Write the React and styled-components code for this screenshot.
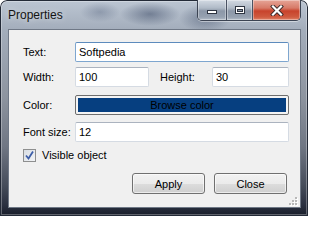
import React from 'react';
import styled, { createGlobalStyle } from 'styled-components';

const GlobalStyle = createGlobalStyle`
  html, body {
    margin: 0;
    padding: 0;
    background: #ffffff;
  }
  body {
    font-family: "Liberation Sans", Arial, sans-serif;
  }
`;

const Window = styled.div`
  width: 308px;
  height: 216px;
  box-sizing: border-box;
  display: flex;
  flex-direction: column;
  border-radius: 7px 7px 0 0;
  background:
    radial-gradient(ellipse 30px 12px at 150px 14px, rgba(40, 55, 85, 0.45), transparent),
    radial-gradient(ellipse 26px 14px at 205px 18px, rgba(40, 55, 85, 0.4), transparent),
    radial-gradient(ellipse 20px 10px at 100px 12px, rgba(60, 75, 105, 0.3), transparent),
    linear-gradient(to bottom, #bcc6d3 0%, #a3adbb 14%, #8d949f 45%, #6f7683 68%, #454c5a 86%, #2a3040 95%, #181d29 100%);
  box-shadow: inset 0 0 0 1px #232a37, inset 0 0 0 2px rgba(255, 255, 255, 0.3);
  overflow: hidden;
`;

const TitleBar = styled.div`
  height: 29px;
  display: flex;
  align-items: flex-start;
  padding-left: 8px;
`;

const Title = styled.div`
  margin-top: 8px;
  font-size: 12px;
  line-height: 14px;
  color: #141414;
  text-shadow: 0 0 6px rgba(255, 255, 255, 0.7);
`;

const CaptionGroup = styled.div`
  margin-left: auto;
  margin-right: 7px;
  display: flex;
  height: 20px;
  border: 1px solid #3b4352;
  border-top: none;
  border-radius: 0 0 5px 5px;
  overflow: hidden;
  box-shadow: 0 1px 0 rgba(255, 255, 255, 0.45);
`;

const CaptionButton = styled.div`
  width: ${p => p.$w}px;
  height: 100%;
  display: flex;
  align-items: center;
  justify-content: center;
  box-sizing: border-box;
  border-left: ${p => (p.$first ? 'none' : '1px solid #4a5263')};
  background: ${p =>
    p.$close
      ? 'linear-gradient(to bottom, #e6a597 0%, #d77a68 40%, #c8432c 55%, #cf5a3f 85%, #e0846a 100%)'
      : 'linear-gradient(to bottom, #d3dae3 0%, #b0bac7 40%, #8c97a7 55%, #96a1b0 85%, #b3bcc8 100%)'};
  box-shadow: inset 0 0 0 1px rgba(255, 255, 255, 0.35);
`;

const Client = styled.div`
  position: relative;
  flex: 1;
  margin: 0 7px 8px 8px;
  box-sizing: border-box;
  background: #f0f0f0;
  border: 1px solid #6f7886;
  padding: 12px 11px 0 14px;
  display: flex;
  flex-direction: column;
  font-size: 11px;
  color: #000;
`;

const Row = styled.div`
  display: flex;
  align-items: center;
  margin-top: ${p => p.$mt || 0}px;
`;

const Label = styled.label`
  width: ${p => p.$w || 52}px;
  flex-shrink: 0;
  margin-left: ${p => p.$ml || 0}px;
  font-size: 11px;
  line-height: 13px;
  color: #000;
`;

const Field = styled.div`
  box-sizing: border-box;
  height: 20px;
  ${p => (p.$w ? `width: ${p.$w}px;` : 'flex: 1;')}
  background: #fff;
  border: 1px solid ${p => (p.$focus ? '#7ea6cf' : '#d5dbe3')};
  border-top-color: ${p => (p.$focus ? '#5d8bbd' : '#abb3bf')};
  border-radius: 2px;
  padding-left: 3px;
  display: flex;
  align-items: center;
  font-size: 11px;
  color: #000;
`;

const BrowseButton = styled.div`
  flex: 1;
  height: 20px;
  box-sizing: border-box;
  border: 1px solid #6e6e6e;
  border-radius: 2px;
  padding: 2px;
  background: #f4f4f4;
  display: flex;
`;

const BrowseFill = styled.div`
  flex: 1;
  background: #063f80;
  display: flex;
  align-items: center;
  justify-content: center;
  font-size: 11px;
  color: #000;
`;

const CheckRow = styled.div`
  display: flex;
  align-items: center;
  gap: 6px;
  margin-top: ${p => p.$mt}px;
`;

const CheckBox = styled.div`
  width: 13px;
  height: 13px;
  box-sizing: border-box;
  border: 1px solid #8e8f8f;
  background: linear-gradient(135deg, #d8dde3 0%, #f2f4f6 100%);
  display: flex;
  align-items: center;
  justify-content: center;
`;

const ButtonRow = styled.div`
  display: flex;
  justify-content: flex-end;
  gap: 9px;
  margin-top: ${p => p.$mt}px;
  margin-right: 2px;
`;

const Button = styled.button`
  width: 73px;
  height: 21px;
  box-sizing: border-box;
  border: 1px solid #707070;
  border-radius: 3px;
  background: linear-gradient(to bottom, #f2f2f2 0%, #ebebeb 50%, #dddddd 50%, #cfcfcf 100%);
  box-shadow: inset 0 0 0 1px rgba(255, 255, 255, 0.6);
  font-family: "Liberation Sans", Arial, sans-serif;
  font-size: 11px;
  color: #000;
  padding: 0;
`;

const Grip = styled.svg`
  position: absolute;
  right: 2px;
  bottom: 1px;
`;

const MinIcon = () => (
  <svg width="12" height="10" viewBox="0 0 12 10">
    <rect x="1.5" y="5.5" width="9" height="3" fill="#fff" stroke="#2d3441" strokeWidth="1" />
  </svg>
);

const MaxIcon = () => (
  <svg width="12" height="10" viewBox="0 0 12 10">
    <rect x="1.5" y="1.5" width="9" height="7" fill="none" stroke="#2d3441" strokeWidth="1" />
    <rect x="2.5" y="2.5" width="7" height="5" fill="none" stroke="#fff" strokeWidth="1" />
    <rect x="3" y="3" width="6" height="1" fill="#fff" />
    <rect x="3.5" y="4.5" width="5" height="2" fill="none" stroke="#2d3441" strokeWidth="1" />
  </svg>
);

const CloseIcon = () => (
  <svg width="14" height="11" viewBox="0 0 14 11">
    <path d="M3 1.5 L11 9.5 M11 1.5 L3 9.5" stroke="#3a2a2a" strokeWidth="4" strokeLinecap="square" />
    <path d="M3 1.5 L11 9.5 M11 1.5 L3 9.5" stroke="#fff" strokeWidth="2.2" strokeLinecap="square" />
  </svg>
);

const GripDots = () => (
  <Grip width="10" height="10" viewBox="0 0 10 10">
    {[[7, 1], [4, 4], [7, 4], [1, 7], [4, 7], [7, 7]].map(([x, y]) => (
      <g key={`${x}-${y}`}>
        <rect x={x + 1} y={y + 1} width="2" height="2" fill="#ffffff" />
        <rect x={x} y={y} width="2" height="2" fill="#b8b8b8" />
      </g>
    ))}
  </Grip>
);

export default function App() {
  return (
    <>
      <GlobalStyle />
      <Window>
        <TitleBar>
          <Title>Properties</Title>
          <CaptionGroup>
            <CaptionButton $w={28} $first>
              <MinIcon />
            </CaptionButton>
            <CaptionButton $w={26}>
              <MaxIcon />
            </CaptionButton>
            <CaptionButton $w={48} $close>
              <CloseIcon />
            </CaptionButton>
          </CaptionGroup>
        </TitleBar>
        <Client>
          <Row>
            <Label>Text:</Label>
            <Field $focus>Softpedia</Field>
          </Row>
          <Row $mt={5}>
            <Label>Width:</Label>
            <Field $w={74}>100</Field>
            <Label $ml={11}>Height:</Label>
            <Field>30</Field>
          </Row>
          <Row $mt={8}>
            <Label>Color:</Label>
            <BrowseButton>
              <BrowseFill>Browse color</BrowseFill>
            </BrowseButton>
          </Row>
          <Row $mt={7}>
            <Label>Font size:</Label>
            <Field>12</Field>
          </Row>
          <CheckRow $mt={7}>
            <CheckBox>
              <svg width="11" height="11" viewBox="0 0 11 11">
                <path d="M2 5.5 L4.5 8.5 L9 1.5" fill="none" stroke="#3d5ea8" strokeWidth="1.8" />
              </svg>
            </CheckBox>
            <Label $w={120}>Visible object</Label>
          </CheckRow>
          <ButtonRow $mt={11}>
            <Button>Apply</Button>
            <Button>Close</Button>
          </ButtonRow>
          <GripDots />
        </Client>
      </Window>
    </>
  );
}
